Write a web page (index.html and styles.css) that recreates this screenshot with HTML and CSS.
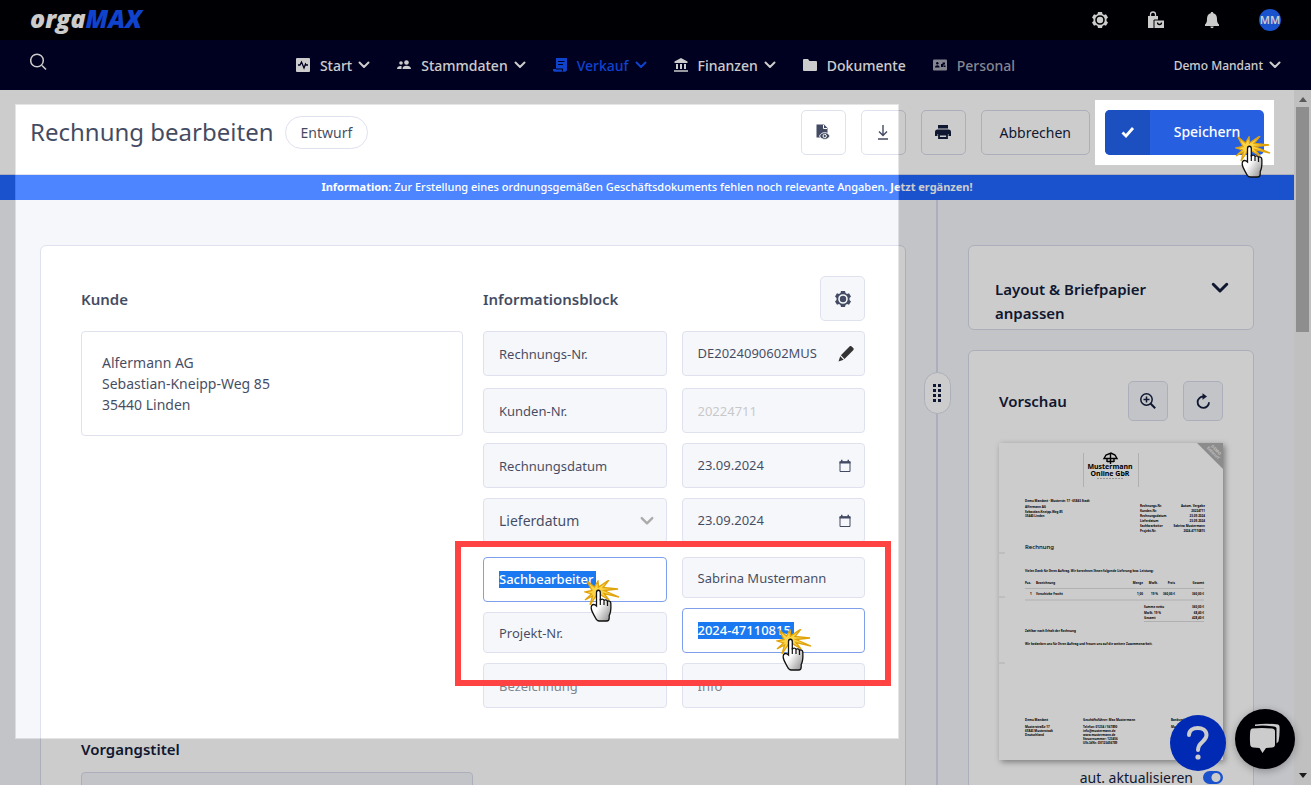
FILE: index.html
```html
<!DOCTYPE html>
<html lang="de">
<head>
<meta charset="utf-8">
<title>orgaMAX – Rechnung bearbeiten</title>
<link rel="stylesheet" href="styles.css">
</head>
<body>
<svg class="sprite" aria-hidden="true">
  <symbol id="chevron" viewBox="0 0 12 8"><path d="M1.500 1.500 6 6l4.500-4.500" fill="none" stroke="currentColor" stroke-width="2" stroke-linecap="round" stroke-linejoin="round"/></symbol>
  <symbol id="gear" viewBox="0 0 18 18"><path d="M7 1h4l.5 2 1.500.9 2-.7 2 3.400-1.500 1.400v2l1.500 1.400-2 3.400-2-.7-1.500.9-.5 2H7l-.5-2-1.500-.9-2 .7-2-3.400L2.500 10V8L1 6.600l2-3.400 2 .7L6.500 3z" fill="currentColor"/><circle cx="9" cy="9" r="4" fill="none" stroke="var(--hole)" stroke-width="1.600"/></symbol>
  <symbol id="calendar" viewBox="0 0 14 14"><path d="M2 3h10v9.500H2z" fill="none" stroke="currentColor" stroke-width="1"/><path d="M1.500 2.300h11v2.200h-11zM3 .8h1.500v2H3zM9.500.8H11v2H9.500z" fill="currentColor"/></symbol>
  <symbol id="click" viewBox="0 0 36 42">
    <path d="M3 1l7.500 6L14 1l.5 6L25 0l-6 7.500L34 9l-14 1.500L35 17l-15-3.500L25 20l-8-5-2 3-3-2-6 9 2.500-9L1 20l6.500-6L1 12l7-1.500z" fill="#fbd44a" stroke="#e0a30c" stroke-width="1.300"/>
    <path d="M12.500 12.500c0-3 3.800-3 3.800 0v8c.5-2 3.700-1.800 3.700.3.600-1.600 3.400-1.200 3.500.8.900-1.200 3.300-.6 3.300 1.400.1 3 .7 8-1.600 12.500V38c0 2-1 3-2.500 3h-7.500c-1.500 0-2.700-1-3.700-3-1.500-3-3.500-5.500-4.200-9-.5-3 .5-4.500 2.500-4.500.9 0 1.800.6 2.700 1.500z" fill="url(#hand)" stroke="#111" stroke-width="1.300"/>
    <path d="M16.300 19v6M20 20.500V25M23.500 21.500V26" stroke="#111" stroke-width="1.200"/>
  </symbol>
  <defs><linearGradient id="hand" x1="0" y1="0" x2="1" y2="1"><stop offset=".45" stop-color="#fff"/><stop offset="1" stop-color="#888"/></linearGradient></defs>
</svg>

<header class="topbar">
  <a class="logo" href="#">orga<span class="logo-accent">MAX</span></a>
  <div class="topbar-actions">
    <button class="icon-btn" aria-label="Einstellungen"><svg width="18" height="18"><use href="#gear"/></svg></button>
    <button class="icon-btn" aria-label="Shop"><svg width="18" height="18" viewBox="0 0 18 18"><path d="M1 5h10v12H1z" fill="currentColor"/><path d="M3.500 8V3.500a2.500 2.500 0 0 1 5 0V5" fill="none" stroke="currentColor" stroke-width="1.300"/><path d="M7 9h10.500v8.500H7z" fill="currentColor" stroke="#000006"/><path d="M10.500 11.500a2 2 0 0 0 4 0" fill="none" stroke="#000" stroke-width="1.300"/></svg></button>
    <button class="icon-btn" aria-label="Benachrichtigungen"><svg width="18" height="18" viewBox="0 0 18 18"><path d="M9 1c.8 0 1.300.5 1.300 1.200C13 3 14 5 14 8c0 3 .5 4 2 5.500V15H2v-1.500C3.500 12 4 11 4 8c0-3 1-5 3.700-5.800C7.700 1.500 8.200 1 9 1zM7.300 15.500h3.400a1.700 1.700 0 0 1-3.400 0z" fill="currentColor"/></svg></button>
    <button class="avatar">MM</button>
  </div>
</header>

<nav class="mainnav">
  <button class="icon-btn search" aria-label="Suche"><svg width="18" height="18" viewBox="0 0 18 18"><circle cx="7" cy="7.500" r="6.300" fill="none" stroke="currentColor" stroke-width="1.500"/><path d="M12 12.500l4 4" stroke="currentColor" stroke-width="1.600"/></svg></button>
  <div class="nav-items">
    <a class="nav-item" href="#"><svg width="14" height="14" viewBox="0 0 14 14"><rect width="14" height="14" rx="1" fill="currentColor"/><path d="M2 7h2l1.500-3 2.500 6L9.500 6l.7 1H12" fill="none" stroke="#000028" stroke-width="1.300"/></svg>Start<svg class="chev" width="12" height="8"><use href="#chevron"/></svg></a>
    <a class="nav-item" href="#"><svg width="14" height="14" viewBox="0 0 14 14"><circle cx="4" cy="5" r="1.800" fill="currentColor"/><circle cx="9.500" cy="4.500" r="2.300" fill="currentColor"/><path d="M0 11c0-2.500 2-3.300 4.500-3v3zM5.500 11c0-2.500 1.500-3.300 4-3.300s4.500.8 4.500 3.300z" fill="currentColor"/></svg>Stammdaten<svg class="chev" width="12" height="8"><use href="#chevron"/></svg></a>
    <a class="nav-item active" href="#"><svg width="14" height="14" viewBox="0 0 14 14"><path d="M3 0h11v11.500a2.300 2.300 0 0 1-2.300 2.300H2A2 2 0 0 1 0 11.500V11h3z" fill="currentColor"/><path d="M5 3.500h6.500M5 6.500h5M3 11h6.500v2.500" fill="none" stroke="#000028" stroke-width="1.100"/></svg>Verkauf<svg class="chev" width="12" height="8"><use href="#chevron"/></svg></a>
    <a class="nav-item" href="#"><svg width="14" height="14" viewBox="0 0 14 14"><path d="M7 0l6.500 3.500V5H.5V3.500zM2 6h2v5H2zM6 6h2v5H6zM10 6h2v5h-2zM0 12.300h14v1.500H0z" fill="currentColor"/></svg>Finanzen<svg class="chev" width="12" height="8"><use href="#chevron"/></svg></a>
    <a class="nav-item" href="#"><svg width="14" height="14" viewBox="0 0 14 14"><path d="M1 1h4l1.500 2H13a1 1 0 0 1 1 1v8a1 1 0 0 1-1 1H1a1 1 0 0 1-1-1V2a1 1 0 0 1 1-1z" fill="currentColor"/></svg>Dokumente</a>
    <a class="nav-item muted" href="#"><svg width="14" height="14" viewBox="0 0 14 14"><rect y="1.500" width="14" height="11" rx="1" fill="currentColor"/><g fill="#000028"><circle cx="4.300" cy="5.300" r="1.200"/><path d="M2 9.500c0-3 4.600-3 4.600 0zM8 9V6h1.500V4.500H12v2H10.500V9zM11 7.500h1.500V9H11z"/></g></svg>Personal</a>
  </div>
  <button class="tenant">Demo Mandant<svg class="chev" width="12" height="8"><use href="#chevron"/></svg></button>
</nav>

<div class="viewport">
  <div class="page">
    <div class="toolbar">
      <h1>Rechnung bearbeiten</h1>
      <span class="badge">Entwurf</span>
      <div class="toolbar-actions">
        <button class="btn square" aria-label="Vorschau"><svg width="18" height="18" viewBox="0 0 18 18"><path d="M2.500 1.500H10L13.500 5v9.500h-11z" fill="currentColor"/><path d="M9.500 2v3.500H13" fill="none" stroke="#fff"/><path d="M5.500 13c2-4.500 8.500-4.500 10.500 0-2 4.500-8.500 4.500-10.500 0z" fill="currentColor" stroke="#fff" stroke-width=".9"/><circle cx="10.700" cy="13" r="1.700" fill="none" stroke="#fff"/></svg></button>
        <button class="btn square" aria-label="Herunterladen"><svg width="18" height="18" viewBox="0 0 18 18"><path d="M9 2v10M5 8.500l4 4 4-4M4 16h10" fill="none" stroke="currentColor" stroke-width="1.400"/></svg></button>
        <button class="btn square" aria-label="Drucken"><svg width="18" height="18" viewBox="0 0 18 18"><path d="M4 2h10v3.500H4zM3.500 6.500h11A2.500 2.500 0 0 1 17 9v4h-2.500v-2h-11v2H1V9a2.500 2.500 0 0 1 2.500-2.500z" fill="currentColor"/><path d="M5 11.500h8V15H5z" fill="none" stroke="currentColor" stroke-width="1.800"/></svg></button>
        <button class="btn">Abbrechen</button>
        <div class="save-wrap">
          <button class="save"><span class="save-icon"><svg width="14" height="12" viewBox="0 0 14 12"><path d="M1.500 6.500l3.500 3.500 7-8" fill="none" stroke="#fff" stroke-width="2.800"/></svg></span><span class="save-label">Speichern</span></button>
          <svg class="click click-save" width="36" height="42"><use href="#click"/></svg>
        </div>
      </div>
    </div>
    <div class="notice"><strong>Information:</strong>&nbsp;Zur Erstellung eines ordnungsgemäßen Geschäftsdokuments fehlen noch relevante Angaben.&nbsp;<a href="#">Jetzt ergänzen!</a></div>

    <div class="content">
      <main class="card form">
        <div class="columns">
          <section>
            <div class="section-head"><h2>Kunde</h2></div>
            <address class="customer">Alfermann AG<br>Sebastian-Kneipp-Weg 85<br>35440 Linden</address>
          </section>
          <section>
            <div class="section-head"><h2>Informationsblock</h2><button class="btn square tint" aria-label="Informationsblock einstellen"><svg width="18" height="18"><use href="#gear"/></svg></button></div>
            <div class="fields">
              <div class="field-col">
                <input class="field first" aria-label="Bezeichnung 1" value="Rechnungs-Nr.">
                <input class="field" aria-label="Bezeichnung 2" value="Kunden-Nr.">
                <input class="field" aria-label="Bezeichnung 3" value="Rechnungsdatum">
                <div class="field before-pair"><select aria-label="Datumsart"><option>Lieferdatum</option></select><svg class="grey" width="14" height="10"><use href="#chevron"/></svg></div>
                <div class="field focused"><input class="selected label-value" aria-label="Bezeichnung 5" value="Sachbearbeiter"><svg class="click click-label" width="36" height="42"><use href="#click"/></svg></div>
                <input class="field short" aria-label="Bezeichnung 6" value="Projekt-Nr.">
                <input class="field" aria-label="Neue Bezeichnung" placeholder="Bezeichnung">
              </div>
              <div class="field-col">
                <div class="field first"><input aria-label="Rechnungs-Nr." value="DE2024090602MUS"><svg class="pencil" width="18" height="18" viewBox="0 0 18 18"><path d="M12.500 1.500c.8-.8 1.500-.6 2.200.1l1.500 1.500c.7.700.8 1.300 0 2.100L7.500 14 3.900 10.300zM3.200 11.200l3.500 3.500L1.500 16.500z"/></svg></div>
                <input class="field" aria-label="Kunden-Nr." value="20224711" disabled>
                <div class="field"><input aria-label="Rechnungsdatum" value="23.09.2024"><svg width="14" height="14"><use href="#calendar"/></svg></div>
                <div class="field before-pair"><input aria-label="Lieferdatum" value="23.09.2024"><svg width="14" height="14"><use href="#calendar"/></svg></div>
                <input class="field short" aria-label="Sachbearbeiter" value="Sabrina Mustermann">
                <div class="field focused"><input class="selected number-value" aria-label="Projekt-Nr." value="2024-47110815"><svg class="click click-number" width="36" height="42"><use href="#click"/></svg></div>
                <input class="field" aria-label="Neue Info" placeholder="Info">
              </div>
              <div class="marker"></div>
            </div>
          </section>
        </div>
        <label class="subject"><span>Vorgangstitel</span><input class="field"></label>
      </main>

      <div class="divider"><button class="grip" aria-label="Breite anpassen"><svg width="10" height="20" viewBox="0 0 10 20"><path d="M1 1h3v3H1zM6 1h3v3H6zM1 6h3v3H1zM6 6h3v3H6zM1 11h3v3H1zM6 11h3v3H6zM1 16h3v3H1zM6 16h3v3H6z" fill="currentColor"/></svg></button></div>

      <aside class="side">
        <button class="card layout"><span>Layout &amp; Briefpapier anpassen</span><svg width="18" height="12"><use href="#chevron"/></svg></button>
        <section class="card preview">
          <div class="preview-head">
            <h2>Vorschau</h2>
            <button class="btn small tint" aria-label="Vergrößern"><svg width="18" height="18" viewBox="0 0 18 18"><circle cx="7.500" cy="7.500" r="5.700" fill="none" stroke="currentColor" stroke-width="1.500"/><path d="M7.500 4.500v6M4.500 7.500h6" stroke="currentColor" stroke-width="1.500"/><path d="M11.500 11.500l4.700 4.700" stroke="currentColor" stroke-width="2"/></svg></button>
            <button class="btn small tint" aria-label="Aktualisieren"><svg width="18" height="18" viewBox="0 0 18 18"><path d="M9.500 4.500a5.700 5.700 0 1 0 5.500 5.700" fill="none" stroke="currentColor" stroke-width="1.800"/><path d="M8.500 1.200l4.500 3.300-4.500 3.300z" fill="currentColor"/></svg></button>
          </div>
          <svg class="doc" viewBox="0 0 224 317" role="img" aria-label="Dokumentvorschau">
            <rect width="224" height="317" fill="#fff"/>
            <path d="M198 0h26v26z" fill="#b0b0b0"/>
            <g class="ribbon" transform="rotate(45 214 10)"><text x="214" y="7">DEMO</text><text x="214" y="11">Entwurf</text></g>
            <path d="M84.500 10v34M139.500 10v34" stroke="#ddd"/>
            <path d="M105 15.500l2-3.500 5-2 4 2 2 3.500zM108 15v4M115 15v4M111.500 11v10M108 18.500h7" fill="none" stroke="#000" stroke-width="1.400"/>
            <g class="brand"><text x="111" y="26">Mustermann</text><text x="111" y="33">Online GbR</text></g>
            <path d="M98 35.500h27" stroke="#bbb" stroke-dasharray="2 1"/>
            <path d="M0 110h6M0 154h6M0 220h6" stroke="#ddd"/>
            <g class="tiny">
              <text x="26" y="59">Demo Mandant · Musterstr. 17 · 65843 Stadt</text>
              <text x="26" y="65">Alfermann AG</text><text x="26" y="70">Sebastian-Kneipp-Weg 85</text><text x="26" y="74">35440 Linden</text>
              <text x="141" y="64">Rechnungs-Nr.</text><text x="141" y="69">Kunden-Nr.</text><text x="141" y="74">Rechnungsdatum</text><text x="141" y="79">Lieferdatum</text><text x="141" y="84">Sachbearbeiter</text><text x="141" y="89">Projekt-Nr.</text>
              <text x="26" y="129">Vielen Dank für Ihren Auftrag. Wir berechnen Ihnen folgende Lieferung bzw. Leistung:</text>
              <text x="26" y="141">Pos.</text><text x="37" y="141">Bezeichnung</text><text x="31" y="152">1</text><text x="37" y="152">Verschiebe Fracht</text>
              <text x="145" y="165">Summe netto</text><text x="145" y="171">MwSt. 19 %</text><text x="145" y="176">Gesamt</text>
              <text x="26" y="189">Zahlbar nach Erhalt der Rechnung</text>
              <text x="26" y="202">Wir bedanken uns für Ihren Auftrag und freuen uns auf die weitere Zusammenarbeit.</text>
              <text x="26" y="278">Demo Mandant</text><text x="26" y="285">Musterstraße 17</text><text x="26" y="289">65843 Musterstadt</text><text x="26" y="293">Deutschland</text>
              <text x="84" y="278">Geschäftsführer: Max Mustermann</text><text x="84" y="285">Telefon: 01234 / 567890</text><text x="84" y="289">info@mustermann.de</text><text x="84" y="293">www.mustermann.de</text><text x="84" y="297">Steuernummer: 123456</text><text x="84" y="301">USt-IdNr.: DE123456789</text>
              <text x="172" y="278">Bankverbindung</text><text x="172" y="285">Musterbank</text>
            </g>
            <g class="tiny end">
              <text x="206" y="64">Autom. Vergabe</text><text x="206" y="69">20224711</text><text x="206" y="74">23.09.2024</text><text x="206" y="79">23.09.2024</text><text x="206" y="84">Sabrina Mustermann</text><text x="206" y="89">2024-47110815</text>
              <text x="144" y="141">Menge</text><text x="159" y="141">MwSt.</text><text x="176" y="141">Preis</text><text x="205" y="141">Gesamt</text>
              <text x="144" y="152">1,00</text><text x="159" y="152">19 %</text><text x="176" y="152">360,00 €</text><text x="205" y="152">360,00 €</text>
              <text x="205" y="165">360,00 €</text><text x="205" y="171">68,40 €</text><text x="205" y="176">428,40 €</text>
            </g>
            <text class="doc-title" x="26" y="106">Rechnung</text>
            <path d="M26 145.500h179M26 157h179M145 178.500h60" stroke="#ddd"/>
          </svg>
          <label class="auto">aut. aktualisieren<input type="checkbox" role="switch" checked></label>
        </section>
      </aside>
    </div>
  </div>
  <div class="scrollbar" aria-hidden="true"><svg width="8" height="5" viewBox="0 0 8 5"><path d="M4 0l4 5H0z" fill="#707070"/></svg><div class="thumb"></div><svg width="8" height="5" viewBox="0 0 8 5"><path d="M0 0h8L4 5z" fill="#222"/></svg></div>
</div>

<button class="bubble help" aria-label="Hilfe"><svg width="24" height="36" viewBox="0 0 24 36"><path d="M3 10C3 .5 20.500.5 20.500 10c0 7-8.500 6.500-8.500 15" fill="none" stroke="#fff" stroke-width="4" stroke-linecap="round"/><circle cx="12" cy="32" r="2.600" fill="#fff"/></svg></button>
<button class="bubble chat" aria-label="Chat"><svg width="32" height="32" viewBox="0 0 32 32"><path d="M6 1.500Q18 0 29 1.500q1.500.3 1.500 2 .5 7-1 15l-2 2V5Q27 3.500 25 3.500 15 2 6 3z" fill="#fff"/><path d="M3 5.500q10-1.200 20 0 3 .3 3 3v13q0 3-3 3l-6 .5-3.500 5-3-5-6-.5q-3 0-3.300-3-.6-6 0-13 .2-2.700 1.800-3z" fill="#fff"/></svg></button>
<div class="spotlight"></div>
</body>
</html>
```
FILE: styles.css
```css
:root {
  --text: #141d3c;
  --line: #d8dbea;
  --tint: #f4f6fb;
  --blue: #2067ff;
  --navy: #000028;
  --hole: #000;
}
* { box-sizing: border-box; }
body {
  margin: 0;
  height: 100vh;
  overflow: hidden;
  position: relative;
  display: flex;
  flex-direction: column;
  font: 14px/21px "Noto Sans", "Open Sans", sans-serif;
  color: var(--text);
}
button, input, select { font: inherit; color: inherit; margin: 0; }
button { padding: 0; border: 0; background: none; }
a { color: inherit; text-decoration: none; }
h1, h2 { margin: 0; }
h2 { font-size: 15px; line-height: 24px; font-weight: 600; }
svg { flex: none; }
.sprite { position: absolute; width: 0; height: 0; }

.topbar {
  flex: none;
  height: 40px;
  padding: 0 30px;
  display: flex;
  align-items: center;
  justify-content: space-between;
  background: #000006;
  color: #fff;
}
.logo { padding-bottom: 4px; font: italic 800 25px/34px "Open Sans", sans-serif; }
.logo-accent { color: #1554ff; }
.topbar-actions { display: flex; align-items: center; gap: 38px; }
.icon-btn { width: 18px; height: 18px; display: flex; }
.avatar {
  width: 22px;
  height: 22px;
  border-radius: 50%;
  background: var(--blue);
  font-size: 11px;
  font-weight: 600;
  line-height: 22px;
}

.mainnav {
  flex: none;
  height: 50px;
  padding: 0 30px;
  display: grid;
  grid-template-columns: 1fr auto 1fr;
  align-items: center;
  background: var(--navy);
  color: #fff;
}
.nav-items { display: flex; gap: 27px; }
.nav-item { display: flex; align-items: center; gap: 10px; font-weight: 500; }
.chev { margin-left: -4px; }
.nav-item.active { color: #1554ff; }
.nav-item.muted { color: #a8a8b4; }
.search { margin-bottom: 6px; }
.tenant {
  justify-self: end;
  display: flex;
  align-items: center;
  gap: 10px;
  font-size: 12px;
  font-weight: 500;
}

.viewport { flex: 1; min-height: 0; display: flex; }
.page { flex: 1; min-width: 0; overflow: hidden; background: var(--tint); }
.scrollbar {
  width: 17px;
  padding: 7px 0;
  display: flex;
  flex-direction: column;
  align-items: center;
  gap: 5px;
  background: #f0f0f0;
}
.thumb { width: 13px; height: 225px; margin-bottom: auto; background: #b2b2b2; }

.toolbar {
  height: 85px;
  padding: 0 30px;
  display: flex;
  align-items: center;
  border-bottom: 1px solid var(--line);
  background: #fff;
}
h1 { font-size: 24px; font-weight: 400; line-height: 32px; }
.badge {
  margin-left: 11px;
  padding: 5px 15px;
  border: 1px solid var(--line);
  border-radius: 17px;
}
.toolbar-actions { margin-left: auto; display: flex; gap: 15px; }
.btn {
  height: 45px;
  padding: 0 18px;
  display: flex;
  align-items: center;
  justify-content: center;
  border: 1px solid var(--line);
  border-radius: 5px;
}
.btn.square { width: 45px; padding: 0; }
.btn.small { width: 40px; height: 40px; padding: 0; }
.btn.tint { background: var(--tint); --hole: #f4f6fb; }
.save-wrap {
  position: relative;
  z-index: 6;
  background: #fff;
  box-shadow: 0 0 0 10px #fff;
}
.save {
  width: 159px;
  height: 45px;
  display: flex;
  overflow: hidden;
  border-radius: 5px;
  background: #275fe1;
  color: #fff;
  font-weight: 500;
  line-height: 44px;
}
.save-icon {
  width: 45px;
  height: 45px;
  display: grid;
  place-items: center;
  background: #1c4fc0;
}
.save-label { flex: 1; }
.click { position: absolute; z-index: 10; }
.click-save { left: 130px; top: 26px; }

.notice {
  height: 25px;
  padding-bottom: 2px;
  display: flex;
  align-items: center;
  justify-content: center;
  background: var(--blue);
  color: #fff;
  font-size: 11px;
  font-weight: 500;
}
.notice a, .notice strong { font-weight: 700; }

.content { padding: 0 40px; display: flex; }
.card { border: 1px solid var(--line); border-radius: 6px; background: #fff; }
.form { flex: 1; min-width: 0; margin-top: 45px; padding: 30px 40px 0; height: 600px; }
.columns { display: grid; grid-template-columns: 1fr 1fr; gap: 20px; }
.section-head {
  height: 45px;
  margin-bottom: 10px;
  display: flex;
  align-items: center;
  justify-content: space-between;
}
.customer {
  padding: 20px;
  border: 1px solid var(--line);
  border-radius: 4px;
  font-style: normal;
}
.fields {
  position: relative;
  display: grid;
  grid-template-columns: 1fr 1fr;
  gap: 15px;
  font-size: 13px;
}
.field-col { min-width: 0; display: flex; flex-direction: column; gap: 10px; }
.field {
  width: 100%;
  height: 45px;
  padding: 0 15px;
  border: 1px solid var(--line);
  border-radius: 4px;
  background: var(--tint);
}
div.field { position: relative; display: flex; align-items: center; gap: 10px; }
div.field input, .field select {
  flex: 1;
  min-width: 0;
  padding: 0;
  border: 0;
  background: none;
  appearance: none;
}
.field select { font-size: 14px; }
div.field > svg { margin-right: -3px; }
div.field > .pencil { margin-right: -6px; }
.field.first { margin-bottom: 2px; }
.field.before-pair { margin-bottom: 4px; }
.field.short { height: 41px; }
.field:disabled { color: #bbb; }
.field::placeholder { color: #60646f; opacity: 1; }
.grey { color: #969696; }
.focused { border-color: #5f88e8; background: #fff; }
div.field .selected { flex: none; z-index: 6; height: 17px; background: #1a78f0; color: #fff; font-weight: 500; }
.label-value { width: 97px; }
.number-value { width: 96px; }
.click-label { left: 100px; top: 22px; }
.click-number { left: 93px; top: 20px; }
.marker {
  position: absolute;
  z-index: 7;
  top: 210px;
  left: -28px;
  right: -26px;
  height: 145px;
  border: 6px solid #ff4242;
}
.subject { display: block; margin-top: 29px; }
.subject span { display: block; font-size: 15px; font-weight: 600; line-height: 24px; }
.subject .field { width: 50%; margin-top: 11px; }

.divider {
  width: 62px;
  display: flex;
  justify-content: center;
  background: linear-gradient(var(--line), var(--line)) center / 2px 100% no-repeat;
}
.grip {
  width: 27px;
  height: 42px;
  margin-top: 172px;
  display: grid;
  place-items: center;
  border: 1px solid var(--line);
  border-radius: 14px;
  background: #fff;
}
.side {
  width: 286px;
  padding-top: 45px;
  display: flex;
  flex-direction: column;
  gap: 20px;
}
.layout {
  padding: 31px 24px 4px 26px;
  display: flex;
  justify-content: space-between;
  text-align: left;
  font-size: 15px;
  font-weight: 600;
  line-height: 24px;
}
.layout span { width: 170px; }
.layout svg { margin-top: 5px; }
.preview { padding: 30px; }
.preview-head { display: flex; align-items: center; gap: 15px; margin-bottom: 22px; }
.preview-head h2 { margin-right: auto; }
.doc { display: block; width: 100%; box-shadow: 2px 2px 6px rgba(0, 0, 0, .4); }
.doc text { font-family: "Noto Sans", sans-serif; fill: #000; }
.doc .tiny { font-size: 3px; font-weight: 700; }
.doc .end { text-anchor: end; }
.doc .brand { font-size: 7px; font-weight: 700; text-anchor: middle; }
.doc .doc-title { font-size: 6px; font-weight: 500; }
.doc .ribbon { text-anchor: middle; font-size: 4px; font-weight: 700; }
.doc .ribbon text { fill: #eee; }
.auto { margin-top: 7px; display: flex; align-items: center; justify-content: flex-end; gap: 10px; }
.auto input {
  appearance: none;
  width: 20px;
  height: 13px;
  margin: 0;
  border-radius: 7px;
  background: radial-gradient(circle at 13px 50%, #fff 4px, var(--blue) 5px);
}

.bubble { position: absolute; display: grid; place-items: center; border-radius: 50%; }
.help { right: 85px; bottom: 14px; width: 56px; height: 56px; background: #0035e0; }
.chat { right: 16px; bottom: 16px; width: 60px; height: 60px; background: #000006; box-shadow: 0 2px 8px rgba(0, 0, 0, .3); }

.spotlight {
  position: absolute;
  z-index: 5;
  inset: 104px 412px 46px 15px;
  border: 1px solid rgba(0, 0, 0, .1);
  background: rgba(255, 255, 255, .2);
  box-shadow: 0 0 0 4000px rgba(0, 0, 0, .2);
  pointer-events: none;
}
```
